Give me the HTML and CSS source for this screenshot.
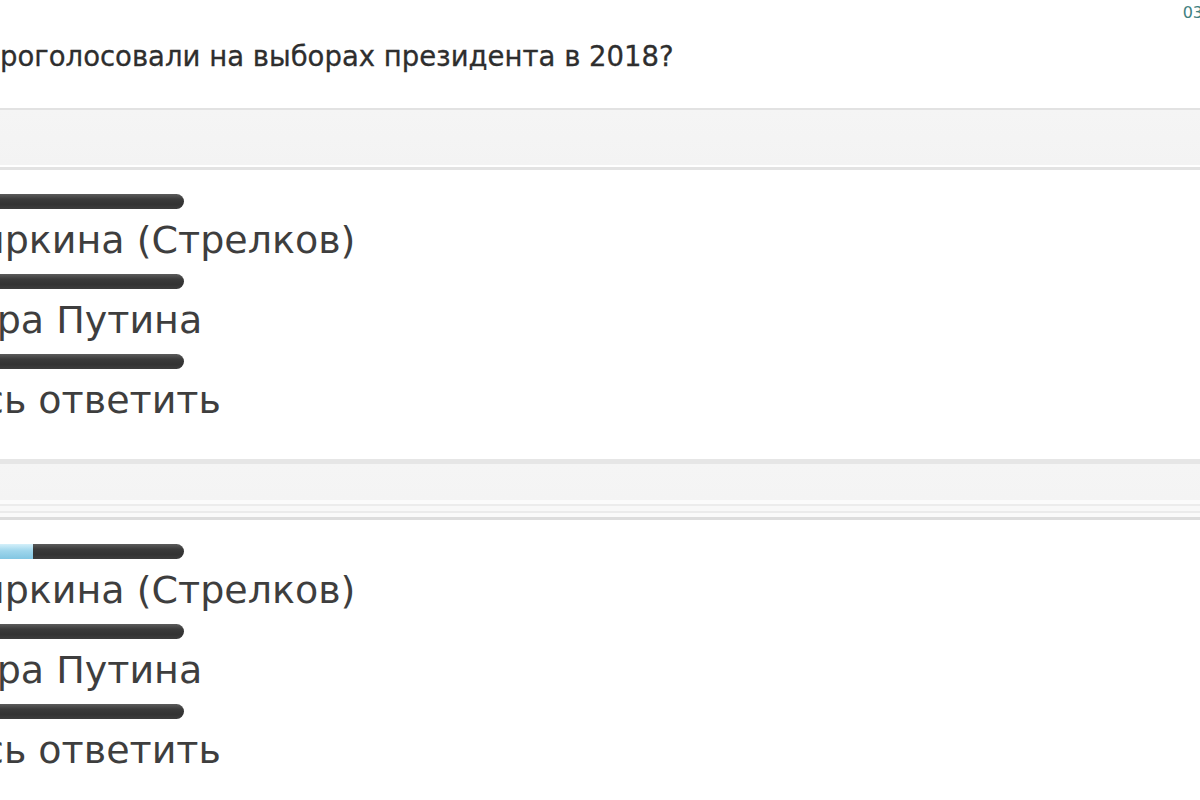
FILE: index.html
```html
<!DOCTYPE html>
<html lang="ru">
<head>
<meta charset="utf-8">
<title>Опрос</title>
<link rel="stylesheet" href="styles.css">
</head>
<body>
<div class="page">
  <div class="meta"><span class="date">03</span></div>
  <h1 class="question">роголосовали на выборах президента в 2018?</h1>

  <div class="band band-one"></div>
  <div class="poll">
    <div class="row">
      <div class="bar"></div>
      <div class="label cut-a">иркина (Стрелков)</div>
    </div>
    <div class="row">
      <div class="bar"></div>
      <div class="label cut-b">ира Путина</div>
    </div>
    <div class="row">
      <div class="bar"></div>
      <div class="label cut-c">сь ответить</div>
    </div>
  </div>

  <div class="band band-two"></div>
  <div class="poll">
    <div class="row">
      <div class="bar"><span class="fill" style="width:33px"></span></div>
      <div class="label cut-a">иркина (Стрелков)</div>
    </div>
    <div class="row">
      <div class="bar"></div>
      <div class="label cut-b">ира Путина</div>
    </div>
    <div class="row">
      <div class="bar"></div>
      <div class="label cut-c">сь ответить</div>
    </div>
  </div>
</div>
</body>
</html>
```
FILE: styles.css
```css
html, body {
  margin: 0;
  padding: 0;
  background: #ffffff;
  overflow: hidden;
}

.page {
  width: 1200px;
  height: 800px;
  overflow: hidden;
  font-family: "DejaVu Sans", Verdana, sans-serif;
  color: #3c3c3c;
}

.meta {
  height: 20px;
  display: flex;
  justify-content: flex-end;
}

.date {
  font-size: 16px;
  line-height: 20px;
  color: #3f7f80;
  margin-right: -3px;
  padding-top: 3px;
}

.question {
  margin: 20px 0 36px 0;
  font-size: 27.5px;
  line-height: 32px;
  font-weight: normal;
  color: #2e2e2e;
  -webkit-text-stroke: 0.3px #2e2e2e;
  white-space: nowrap;
}

.band-one {
  height: 62px;
  background: linear-gradient(to bottom,
    #e2e2e2 0, #e2e2e2 2px,
    #f5f5f5 2px, #f3f3f3 57px,
    #ffffff 57px, #ffffff 59px,
    #e3e3e3 59px, #e3e3e3 62px);
}

.band-two {
  margin-top: 25px;
  height: 61px;
  background: linear-gradient(to bottom,
    #e6e6e6 0, #e6e6e6 5px,
    #f5f5f5 5px, #f4f4f4 41px,
    #fbfbfb 41px, #fbfbfb 45px,
    #ececec 45px, #ececec 47px,
    #f8f8f8 47px, #f8f8f8 52px,
    #ebebeb 52px, #ebebeb 54px,
    #fafafa 54px, #fafafa 58px,
    #dddddd 58px, #dddddd 61px);
}

.poll {
  padding-top: 24px;
}

.row {
  height: 80px;
  display: flex;
  flex-direction: column;
}

.bar {
  width: 184px;
  height: 15px;
  border-radius: 0 8px 8px 0;
  background: linear-gradient(to bottom, #5c5c5c 0, #3a3a3a 35%, #333333 70%, #3d3d3d 100%);
  display: flex;
  overflow: hidden;
  flex: none;
}

.fill {
  display: block;
  height: 100%;
  background: linear-gradient(to bottom, #d4f0fa 0, #9fd6ec 45%, #82c6e2 100%);
}

.label {
  margin-top: 6px;
  font-size: 38px;
  line-height: 50px;
  color: #3e3e3e;
  white-space: nowrap;
}

.cut-a {
  margin-left: -20px;
}

.cut-b {
  margin-left: -28px;
}

.cut-c {
  margin-left: -17px;
}
```
